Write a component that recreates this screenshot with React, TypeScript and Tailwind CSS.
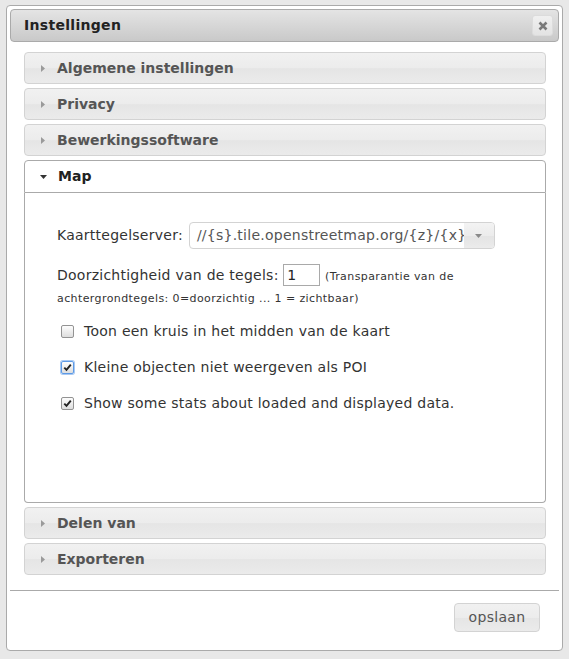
import React from "react";

const RightTri = () => (
  <svg width="4" height="7" viewBox="0 0 4 7" className="shrink-0">
    <polygon points="0,0 4,3.5 0,7" fill="#9a9a9a" />
  </svg>
);

const DownTri = ({ color = "#333" }: { color?: string }) => (
  <svg width="7" height="4" viewBox="0 0 7 4" className="shrink-0">
    <polygon points="0,0 7,0 3.5,4" fill={color} />
  </svg>
);

const Header = ({ title }: { title: string }) => (
  <div className="h-[32px] border border-[#d3d3d3] rounded-[4px] bg-[linear-gradient(to_bottom,#f1f1f1_0%,#ececec_50%,#e5e5e5_52%,#ebebeb_100%)] flex items-center pl-[16px] text-[#555] font-bold text-[14px]">
    <RightTri />
    <span className="ml-[12px]">{title}</span>
  </div>
);

const Check = ({ checked, focused }: { checked?: boolean; focused?: boolean }) => (
  <span
    className={
      "relative w-[13px] h-[13px] rounded-[2px] border flex items-center justify-center bg-[linear-gradient(to_bottom,#fdfdfd,#dedede)] shrink-0 " +
      (focused ? "border-[#5d9ae6] shadow-[0_0_0_1px_#a9c9f2]" : "border-[#939393]")
    }
  >
    {checked && (
      <svg width="9" height="9" viewBox="0 0 9 9">
        <path d="M1.3 4.6 L3.5 6.9 L7.8 1.6" fill="none" stroke="#222" strokeWidth="1.9" />
      </svg>
    )}
  </span>
);

export default function App() {
  return (
    <div
      className="w-[569px] h-[659px] bg-[#e8e8e8] pt-[5px] pl-[6px] overflow-hidden"
      style={{ fontFamily: '"DejaVu Sans", Verdana, sans-serif' }}
    >
      <div className="w-[557px] border border-[#aaaaaa] rounded-[4px] bg-white p-[3px] flex flex-col">
        {/* title bar */}
        <div className="h-[33px] border border-[#aaaaaa] rounded-[4px] bg-[linear-gradient(to_bottom,#e4e4e4,#c9c9c9)] flex items-center pl-[13px] pr-[5px]">
          <span className="font-bold text-[14px] tracking-[0.3px] text-[#222]">Instellingen</span>
          <div className="ml-auto w-[21px] h-[21px] rounded-[3px] border border-[#dcdcdc] bg-[linear-gradient(to_bottom,#f0f0f0,#e3e3e3)] flex items-center justify-center">
            <svg width="10" height="10" viewBox="0 0 10 10">
              <path d="M1.5 1.5 L8.5 8.5 M8.5 1.5 L1.5 8.5" stroke="#7a7a7a" strokeWidth="2.6" strokeLinecap="butt" />
            </svg>
          </div>
        </div>

        {/* accordion */}
        <div className="pt-[10px] pl-[14px] pr-[13px] pb-[15px] flex flex-col gap-[4px]">
          <Header title="Algemene instellingen" />
          <Header title="Privacy" />
          <Header title="Bewerkingssoftware" />
          <div className="flex flex-col">
            <div className="h-[33px] border border-[#aaaaaa] rounded-t-[4px] bg-white flex items-center pl-[15px] text-[#212121] font-bold text-[14px]">
              <DownTri color="#333" />
              <span className="ml-[11px]">Map</span>
            </div>
            <div className="h-[310px] border border-t-0 border-[#aaaaaa] rounded-b-[4px] bg-white pl-[32px] pr-[20px] pt-[29px] text-[14px] tracking-[0.25px] text-[#333]">
              <div className="flex items-center h-[27px]">
                <span>Kaarttegelserver:</span>
                <div className="ml-[6px] w-[306px] h-[27px] border border-[#d3d3d3] rounded-[4px] flex overflow-hidden">
                  <div className="flex-1 flex items-center pl-[7px] text-[#555] overflow-hidden whitespace-nowrap">
                    //{"{s}"}.tile.openstreetmap.org/{"{z}"}/{"{x}"}/{"{y}"}.png
                  </div>
                  <div className="w-[30px] shrink-0 bg-[linear-gradient(to_bottom,#f3f3f3,#ececec_50%,#e4e4e4_52%,#ebebeb)] flex items-center justify-center">
                    <DownTri color="#8a8a8a" />
                  </div>
                </div>
              </div>
              <p className="mt-[16px] leading-[21px]">
                <span>Doorzichtigheid van de tegels: </span>
                <span className="inline-block align-middle w-[37px] h-[22px] border border-[#a9a9a9] pl-[3px] leading-[20px] text-[#222] relative top-[-1px]">
                  1
                </span>{" "}
                <span className="text-[11px] tracking-[0.4px]">
                  (Transparantie van de achtergrondtegels: 0=doorzichtig ... 1 = zichtbaar)
                </span>
              </p>
              <div className="mt-[12px] flex flex-col gap-[16px] pl-[4px]">
                <div className="h-[20px] flex items-center">
                  <Check />
                  <span className="ml-[10px]">Toon een kruis in het midden van de kaart</span>
                </div>
                <div className="h-[20px] flex items-center">
                  <Check checked focused />
                  <span className="ml-[10px]">Kleine objecten niet weergeven als POI</span>
                </div>
                <div className="h-[20px] flex items-center">
                  <Check checked />
                  <span className="ml-[10px]">Show some stats about loaded and displayed data.</span>
                </div>
              </div>
            </div>
          </div>
          <Header title="Delen van" />
          <Header title="Exporteren" />
        </div>

        {/* button pane */}
        <div className="border-t border-[#aaaaaa] pt-[12px] pb-[15px] pr-[19px] flex justify-end">
          <button className="w-[86px] h-[29px] border border-[#d3d3d3] rounded-[4px] bg-[linear-gradient(to_bottom,#f1f1f1_0%,#ececec_50%,#e5e5e5_52%,#ebebeb_100%)] text-[14px] tracking-[0.3px] text-[#555] flex items-center justify-center">
            opslaan
          </button>
        </div>
      </div>
    </div>
  );
}
